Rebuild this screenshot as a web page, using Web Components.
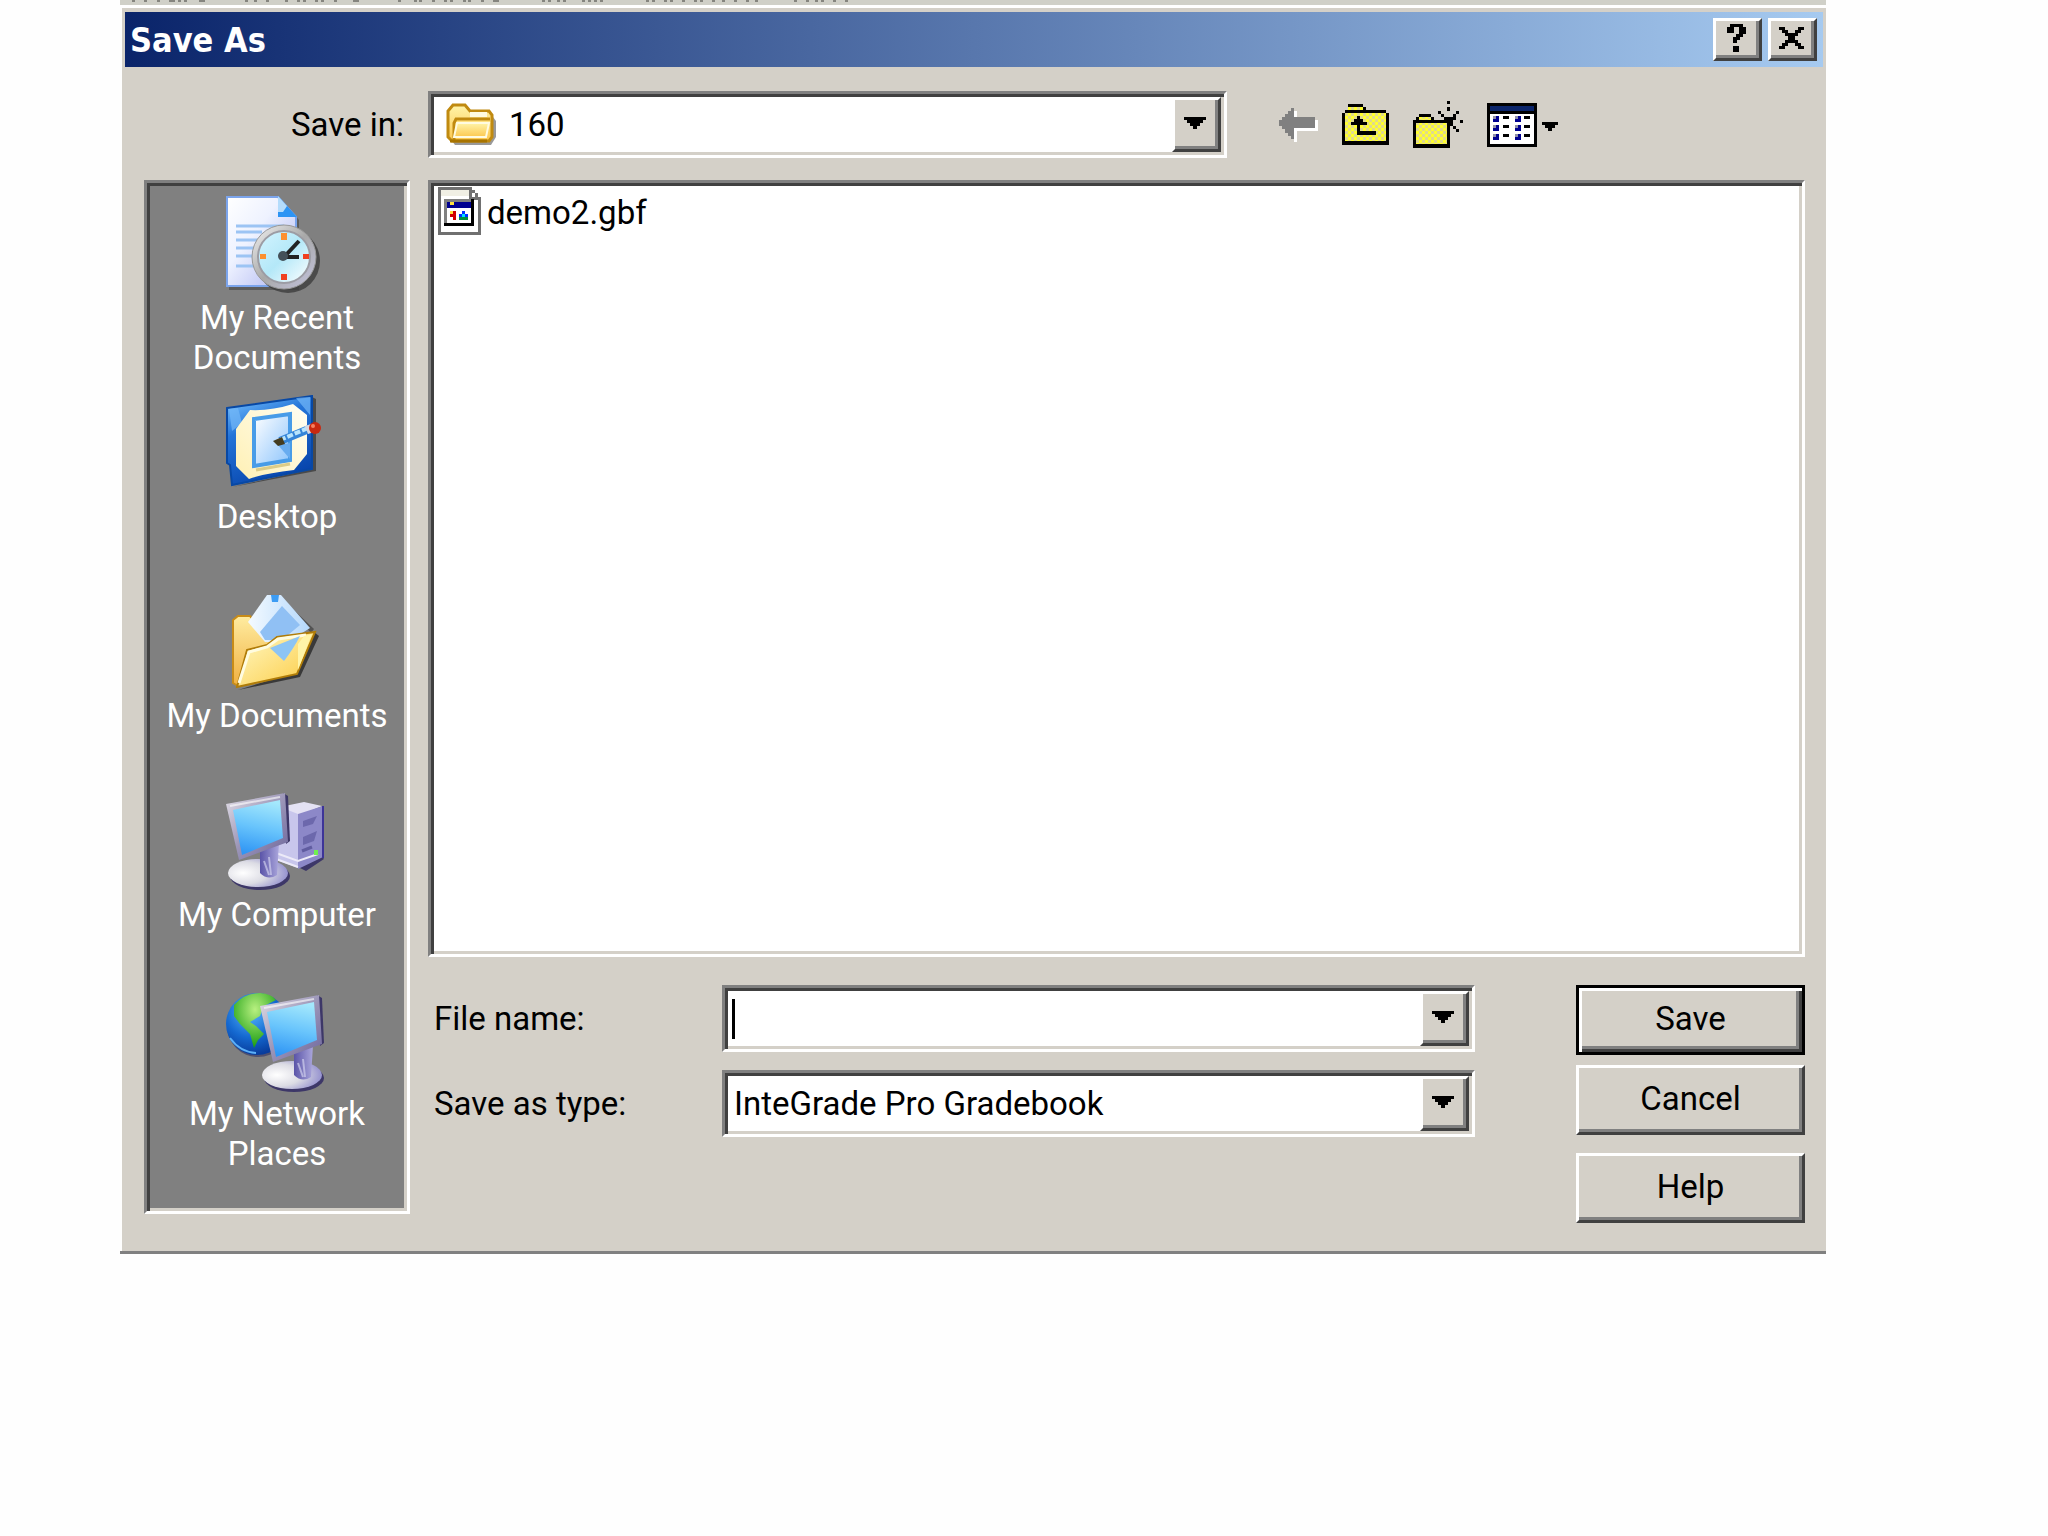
<!DOCTYPE html>
<html lang="en">
<head>
<meta charset="utf-8">
<title>Save As</title>
<style>
  body {
    margin: 0;
    background: #fefefe;
    color: #000;
    font: 33px/40px Roboto, "Liberation Sans", sans-serif;
    --face: #d4d0c8;
    --shadow: #808080;
    --dark: #404040;
  }
  .screen {
    margin: 0 222px 0 120px;
  }
</style>
</head>
<body>
<div class="screen">
  <menu-remnant></menu-remnant>
  <save-dialog heading="Save As">
    <dialog-field slot="location" kind="select" label="Save in:" value="160" icon="folder"></dialog-field>
    <tool-button slot="tools" icon="back" label="Go to last folder visited"></tool-button>
    <tool-button slot="tools" icon="up" label="Up one level"></tool-button>
    <tool-button slot="tools" icon="newFolder" label="Create new folder"></tool-button>
    <tool-button slot="tools" icon="views" label="View menu"></tool-button>

    <place-item slot="places" icon="recent">My Recent Documents</place-item>
    <place-item slot="places" icon="desktop">Desktop</place-item>
    <place-item slot="places" icon="documents">My Documents</place-item>
    <place-item slot="places" icon="computer">My Computer</place-item>
    <place-item slot="places" icon="network">My Network Places</place-item>

    <file-item slot="files">demo2.gbf</file-item>

    <dialog-field slot="fields" kind="text" label="File name:"></dialog-field>
    <dialog-field slot="fields" kind="select" label="Save as type:" value="InteGrade Pro Gradebook"></dialog-field>

    <push-button slot="actions" primary>Save</push-button>
    <push-button slot="actions">Cancel</push-button>
    <push-button slot="actions" class="apart">Help</push-button>
  </save-dialog>
</div>

<script>
const monitor = `
  <ellipse cx="34" cy="83" rx="30" ry="14" fill="#3d3768"/>
  <ellipse cx="32" cy="80" rx="30" ry="14" fill="url(#base)"/>
  <path d="M34 58L53 50L51 82Q42 88 34 80Z" fill="url(#stem)"/>
  <path d="M38 68l5 14M43 64l2 18" stroke="#dcdcf4" stroke-width="2" opacity=".6"/>
  <path d="M57 0L62 3L64 48L60 51Z" fill="#3d3768"/>
  <path d="M0 11L59 0L62 49L13 67Z" fill="url(#bezel)"/>
  <path d="M7 17L54 7L57 45L16 62Z" fill="url(#screen)"/>
  <path d="M4 13L54 4" stroke="#fff" stroke-width="2" opacity=".6"/>`;

const monitorDefs = `
  <defs>
    <radialGradient id="base" cx=".25" cy=".5" r=".8">
      <stop offset="0" stop-color="#fff"/><stop offset=".5" stop-color="#dcdce4"/><stop offset="1" stop-color="#8c88cc"/>
    </radialGradient>
    <linearGradient id="stem"><stop offset="0" stop-color="#5a54a8"/><stop offset="1" stop-color="#aaa6dc"/></linearGradient>
    <linearGradient id="bezel" x2="1" y2="1">
      <stop offset="0" stop-color="#e4e0e8"/><stop offset=".5" stop-color="#9c96b8"/><stop offset="1" stop-color="#6c659c"/>
    </linearGradient>
    <linearGradient id="screen" x1=".6" x2=".4" y2="1">
      <stop offset="0" stop-color="#a4e8fc"/><stop offset=".5" stop-color="#68c4fc"/><stop offset="1" stop-color="#2f95f4"/>
    </linearGradient>
  </defs>`;

const dither = `
  <defs>
    <pattern id="dither" width="6" height="6" patternUnits="userSpaceOnUse">
      <rect width="6" height="6" fill="#ffff30"/>
      <path d="M0 0h3v3H0zM3 3h3v3H3z" fill="#e0da8c"/>
    </pattern>
  </defs>`;

const icons = {
  folder: `<svg width="51" height="44" viewBox="0 0 51 44">
    <defs>
      <linearGradient id="f" x2="0" y2="1"><stop offset="0" stop-color="#fff4a8"/><stop offset="1" stop-color="#fcc850"/></linearGradient>
    </defs>
    <path d="M6 38h38l3-4V14l3 4v16l-5 8H9z" fill="#555" opacity=".6"/>
    <path d="M2 34V8L7 2h12l5 6h19l3 4v22l-3 4H6z" fill="url(#f)" stroke="#c08a10" stroke-width="3"/>
    <path d="M24 9h17v5H24z" fill="#fffbe0"/>
    <path d="M8 37V20l2-4h34" fill="none" stroke="#c08a10" stroke-width="3"/>
    <path d="M11 20h32l-3 14H8z" fill="url(#f)" stroke="#fffbe0" stroke-width="2"/>
    <path d="M4 38h37" stroke="#a87400" stroke-width="3"/>
  </svg>`,

  back: `<svg width="39" height="34" viewBox="0 0 39 34" shape-rendering="crispEdges">
    <path d="M0 12h3V9h3V6h3V3h3V0h3v9h21v11H15v11h-3v-3H9v-3H6v-4H3v-3H0z" fill="#fff" transform="translate(3 3)"/>
    <path d="M0 12h3V9h3V6h3V3h3V0h3v9h21v11H15v11h-3v-3H9v-3H6v-4H3v-3H0z" fill="#808080"/>
  </svg>`,

  up: `<svg width="47" height="41" viewBox="0 0 47 41" shape-rendering="crispEdges">${dither}
    <path d="M3 6h3V0h15v3h3v3h20v3h3v32H0V9h3z" fill="#000"/>
    <path d="M6 3h15v3H6zM3 9h41v28H3z" fill="url(#dither)"/>
    <path d="M15 12h3v3h3v3h4v3h-7v6h16v4H15V21H9v-3h3v-3h3z" fill="#000"/>
  </svg>`,

  newFolder: `<svg width="50" height="47" viewBox="0 0 50 47" shape-rendering="crispEdges">${dither}
    <path d="M0 19h3v-3h3v-3h12v3h3v3h16v28H0z" fill="#000"/>
    <path d="M6 16h12v3H6zM3 22h31v21H3z" fill="url(#dither)"/>
    <path d="M34 0h3v3h-3zM34 6h3v4h-3zM25 10h3v3h-3zM28 13h3v3h-3zM31 16h3v3h-3zM43 10h3v3h-3zM43 13h-3v3h3zM40 16h-3v3h3zM34 16h3v3h-3zM37 19h3v3h-3zM40 22h-3v3h3zM40 19h3v-3h-3zM47 19h3v3h-3zM40 25h3v3h-3zM43 28h3v3h-3zM28 19h3v3h-3zM34 25h3v3h-3z" fill="#000"/>
  </svg>`,

  views: `<svg width="71" height="44" viewBox="0 0 71 44" shape-rendering="crispEdges">
    <path d="M0 0h50v44H0z"/>
    <path d="M3 3h44v5H3z" fill="#0a246a"/>
    <path d="M3 11h44v30H3z" fill="#fff"/>
    <path d="M6 13h6v6H6zM6 22h6v6H6zM6 31h6v6H6zM28 13h6v6h-6zM28 22h6v6h-6zM28 31h6v6h-6z" fill="#000090"/>
    <path d="M6 13h3v3H6zM6 22h3v3H6zM6 31h3v3H6zM28 13h3v3h-3zM28 22h3v3h-3zM28 31h3v3h-3z" fill="#9090a8"/>
    <path d="M16 13h6v3h-6zM16 22h6v3h-6zM16 31h6v3h-6zM37 13h6v3h-6zM37 22h6v3h-6zM37 31h6v3h-6z"/>
    <path d="M55 19h16v3h-3v3h-3v3h-4v-3h-3v-3h-3z"/>
  </svg>`,

  help: `<svg width="19" height="28" viewBox="0 0 19 28" shape-rendering="crispEdges">
    <path d="M3 0h13v3h3v7h-3v3h-3v3h-3v3H6v-6h3v-3h3V3H7v6H0V3h3zM6 22h6v6H6z"/>
  </svg>`,

  close: `<svg width="25" height="22" viewBox="0 0 25 22" shape-rendering="crispEdges">
    <path d="M0 0h6v3h3v3h7V3h3V0h6v3h-3v3h-3v3h-3v4h3v3h3v3h3v3h-6v-3h-3v-3H9v3H6v3H0v-3h3v-3h3v-3h3V9H6V6H3V3H0z"/>
  </svg>`,

  arrow: `<svg width="22" height="12" viewBox="0 0 22 12" shape-rendering="crispEdges">
    <path d="M0 0h22v3h-3v3h-3v3h-3v3H9V9H6V6H3V3H0z"/>
  </svg>`,

  file: `<svg width="43" height="48" viewBox="0 0 43 48" shape-rendering="crispEdges">
    <path d="M0 0h34v3h3v3h3v4h3v38H0z" fill="#707070"/>
    <path d="M3 3h28v10h9v32H3z" fill="#fff"/>
    <path d="M3 3h28v6H3z" fill="#f0efe4"/>
    <path d="M34 6h3v4h-3z" fill="#fff"/>
    <path d="M6 12h30v27H6z" fill="#000"/>
    <path d="M6 12h27v24H6z" fill="#808080"/>
    <path d="M9 15h24v6H9z" fill="#000090"/>
    <path d="M9 21h24v15H9z" fill="#fff"/>
    <path d="M12 15h4v3h-4z" fill="#ffe040"/>
    <path d="M12 27h3v-3h3v9h-3v-3h-3z" fill="#d00000"/>
    <path d="M12 24h3v3h-3z" fill="#ffe040"/>
    <path d="M21 27h9v6h-9z" fill="#009040"/>
    <path d="M24 24h3v3h-3zM21 27h3v3h-3zM27 27h3v3h-3z" fill="#0030ff"/>
    <path d="M24 27h3v3h-3z" fill="#00e0ff"/>
  </svg>`,

  recent: `<svg width="102" height="102" viewBox="0 0 102 102">
    <defs>
      <linearGradient id="p" x2="1" y2="1"><stop offset="0" stop-color="#fff"/><stop offset=".4" stop-color="#eef2ff"/><stop offset="1" stop-color="#a8b0f0"/></linearGradient>
      <linearGradient id="r" x2="1" y2="1"><stop offset="0" stop-color="#f4f4f4"/><stop offset=".5" stop-color="#a8a8a8"/><stop offset="1" stop-color="#c4c4e0"/></linearGradient>
      <linearGradient id="d" x2="1" y2="1"><stop offset="0" stop-color="#d4f4ff"/><stop offset=".5" stop-color="#b4e8f8"/><stop offset="1" stop-color="#fff"/></linearGradient>
    </defs>
    <path d="M3 91h67V20l3 4v70H3z" fill="#444" opacity=".6"/>
    <path d="M1 1h51l18 20v69H1z" fill="url(#p)" stroke="#7ba4ec" stroke-width="2"/>
    <path d="M52 0l19 21H52z" fill="#2c94f4"/>
    <path d="M52 0l9 10-4 6h-5z" fill="#b4dcfc"/>
    <path d="M10 30h48M10 36h26M10 44h22M10 52h18M10 60h18M10 70h18" stroke="#9cc4f4" stroke-width="3"/>
    <circle cx="62" cy="65" r="32" fill="#3c3c3c" opacity=".8"/>
    <circle cx="58" cy="61" r="32" fill="url(#r)" stroke="#999" stroke-width="1"/>
    <circle cx="58" cy="61" r="26" fill="url(#d)" stroke="#9c9ca4" stroke-width="2"/>
    <path d="M55 37h6v7h-6zM34 58h6v5h-6z" fill="#fc9030"/>
    <path d="M55 78h6v6h-6zM77 58h6v5h-6z" fill="#f04020"/>
    <path d="M58 61L73 45" stroke="#222" stroke-width="4"/>
    <path d="M57 61H73" stroke="#222" stroke-width="4"/>
    <circle cx="57" cy="60" r="5" fill="#445058"/>
  </svg>`,

  desktop: `<svg width="102" height="102" viewBox="0 0 102 102">
    <defs>
      <linearGradient id="b" x1=".3" x2=".7" y2="1"><stop offset="0" stop-color="#68b4f8"/><stop offset=".3" stop-color="#2474d8"/><stop offset="1" stop-color="#0440a8"/></linearGradient>
      <linearGradient id="c" x1="1" x2="0" y2="1"><stop offset="0" stop-color="#fffef4"/><stop offset="1" stop-color="#fff0b4"/></linearGradient>
      <linearGradient id="g" x2="1" y2="1"><stop offset="0" stop-color="#fff"/><stop offset="1" stop-color="#8cc4fc"/></linearGradient>
    </defs>
    <path d="M6 92L90 76V4l-4-2v72z" fill="#333" opacity=".7"/>
    <path d="M1 13L86 1V74L6 90L4 70L1 68z" fill="url(#b)" stroke="#0848a4" stroke-width="2"/>
    <path d="M3 14L12 13L16 28L6 36zM70 3l14-1v18z" fill="#74b8f8" opacity=".7"/>
    <path d="M24 15Q45 16 67 9L81 20V59L68 75Q40 78 23 84L10 71V34z" fill="url(#c)"/>
    <path d="M28 24L64 19V65L28 71z" fill="url(#g)" stroke="#489ce8" stroke-width="4"/>
    <path d="M30 75l34-6" stroke="#dccc88" stroke-width="3"/>
    <path d="M52 50l12 14V48z" fill="#68acf0"/>
    <path d="M54 46L83 34" stroke="#3484d8" stroke-width="8"/>
    <path d="M54 45L82 33" stroke="#b8e4fc" stroke-width="4" stroke-dasharray="6 2"/>
    <path d="M47 46l9-4 3 7-7 2z" fill="#443c20"/>
    <path d="M79 31l6-2 3 8-6 2z" fill="#d8d8e0"/>
    <circle cx="89" cy="33" r="6" fill="#c82810"/>
    <circle cx="87" cy="31" r="2" fill="#f88060"/>
  </svg>`,

  documents: `<svg width="102" height="102" viewBox="0 0 102 102">
    <defs>
      <linearGradient id="k" x2="0" y2="1"><stop offset="0" stop-color="#ffeca0"/><stop offset="1" stop-color="#f0b040"/></linearGradient>
      <linearGradient id="w" x2="1" y2="1"><stop offset="0" stop-color="#fffac8"/><stop offset="1" stop-color="#fcca40"/></linearGradient>
      <linearGradient id="n" x2="1"><stop offset="0" stop-color="#f4faff"/><stop offset="1" stop-color="#b4d8fc"/></linearGradient>
    </defs>
    <path d="M12 96L74 83L93 42l-5-4L70 78z" fill="#222" opacity=".75"/>
    <path d="M52 1L88 35l-3 4z" fill="#333" opacity=".6"/>
    <path d="M7 26l5-4h12l22 26L12 92l-5-3z" fill="url(#k)" stroke="#c88c18" stroke-width="2"/>
    <path d="M41 1h14L84 34L62 48H39L22 28z" fill="url(#n)"/>
    <path d="M56 12L74 31L56 46H39L34 38z" fill="#90c0f4"/>
    <path d="M45 1h8l-1 7h-6z" fill="#3c9cf4"/>
    <path d="M21 56L41 51L51 43L89 38L71 80L11 93z" fill="url(#w)" stroke="#b07c08" stroke-width="2"/>
    <path d="M13 89L23 58L41 53L52 45L80 41" fill="none" stroke="#fffce0" stroke-width="3"/>
    <path d="M78 42l8-2L72 76V50z" fill="#fff4a8"/>
    <path d="M44 54L74 42Q68 54 58 67z" fill="#8cc4f4"/>
  </svg>`,

  computer: `<svg width="102" height="102" viewBox="0 0 102 102">${monitorDefs}
    <path d="M72 74l8 4L98 66l-3-4z" fill="#3d3768"/>
    <path d="M54 14L78 9L96 13L72 23z" fill="#e4e2f4"/>
    <path d="M54 14L72 21V75L48 66z" fill="#c8c6ec"/>
    <path d="M72 21L97 13V64L72 76z" fill="#8c88c8"/>
    <path d="M96 13h2v52h-2z" fill="#3d3498"/>
    <path d="M77 28l14-5-4 8-10 3zM77 44l14-6-3 10-11 4z" fill="#6c68ac"/>
    <path d="M76 58l10-4" stroke="#605ca0" stroke-width="3"/>
    <path d="M50 60l22 8 20-7M50 66l22 8" fill="none" stroke="#eceaf8" stroke-width="2"/>
    <path d="M88 57h4v5h-4z" fill="#70f050"/>
    ${monitor}
  </svg>`,

  network: `<svg width="102" height="102" viewBox="0 0 102 102">${monitorDefs}
    <defs>
      <radialGradient id="o" cx=".4" cy=".3" r=".7"><stop offset="0" stop-color="#58b8fc"/><stop offset=".6" stop-color="#1468d0"/><stop offset="1" stop-color="#083c9c"/></radialGradient>
      <radialGradient id="l" cx=".5" cy=".3" r=".7"><stop offset="0" stop-color="#b8f080"/><stop offset="1" stop-color="#189c10"/></radialGradient>
    </defs>
    <circle cx="32" cy="34" r="31" fill="#303060" opacity=".6"/>
    <circle cx="31" cy="32" r="31" fill="url(#o)"/>
    <path d="M8 13Q18 1 34 1Q46 2 50 8L38 14L34 24L24 30L30 34L38 42L32 48L28 56L24 42L14 32L8 24z" fill="url(#l)"/>
    <path d="M4 46Q14 60 30 61" fill="none" stroke="#5cb0f8" stroke-width="2"/>
    <g transform="translate(34 3)">${monitor}</g>
  </svg>`
};

const raised = `
  background: var(--face);
  border: 3px solid;
  border-color: #fff var(--dark) var(--dark) #fff;
  box-shadow: inset -3px -3px var(--shadow);`;

const sunken = `
  border: 3px solid;
  border-color: var(--shadow) #fff #fff var(--shadow);
  box-shadow: inset 3px 3px var(--dark), inset -3px -3px var(--face);`;

// Lower edge of the menu bar of the window behind the dialog
class MenuRemnant extends HTMLElement {
  constructor() {
    super();
    const ticks = [132, 144, 157, 169, 172, 178, 184, 199, 202, 245, 254, 266, 285, 297, 303, 315, 321, 334,
      353, 356, 398, 414, 419, 432, 444, 450, 463, 468, 481, 493, 496, 542, 548, 557, 563, 582, 588, 594, 600,
      646, 652, 664, 670, 682, 694, 700, 712, 722, 734, 746, 755, 794, 806, 815, 821, 833, 845];
    this.attachShadow({mode: 'open'}).innerHTML = `
      <style>
        :host { display: block; background: #d0d0c8; border-bottom: 3px solid #fff; }
        svg { display: block; }
      </style>
      <svg width="760" height="5" aria-hidden="true" shape-rendering="crispEdges">
        <path d="${ticks.map(x => `M${x - 120} 0h3v2h-3z`).join('')}" fill="#85857f"/>
      </svg>`;
  }
}

class SaveDialog extends HTMLElement {
  constructor() {
    super();
    this.attachShadow({mode: 'open'}).innerHTML = `
      <style>
        :host { display: block; border-bottom: 3px solid var(--shadow); }
        .window { margin-left: 2px; padding: 4px 3px 0; background: var(--face); }
        header {
          display: flex; align-items: center; gap: 6px; height: 55px; padding: 0 6px 0 5px;
          background: linear-gradient(90deg, #0a246a, #a6caf0);
        }
        h1 { flex: 1; margin: 0; color: #fff; font: bold 34px/40px "DejaVu Sans Condensed", "DejaVu Sans", sans-serif; }
        header button {
          display: flex; justify-content: center; align-items: center;
          width: 49px; height: 43px; padding: 0 3px 3px 0; ${raised}
        }
        .content { padding: 24px 18px 28px 19px; }
        .top { display: flex; align-items: center; margin-bottom: 22px; }
        .top slot[name=location]::slotted(*) { flex: 1; --label-width: 284px; --label-pad: 24px; --label-align: right; }
        .tools { display: flex; align-items: center; gap: 24px; margin: 0 247px 0 52px; }
        .main { display: flex; align-items: flex-start; gap: 18px; }
        nav {
          flex: none; box-sizing: border-box; width: 266px; padding: 13px 6px 20px;
          background: #808080; ${sunken}
        }
        .right { flex: 1; display: flex; flex-direction: column; gap: 28px; }
        .files { box-sizing: border-box; min-height: 777px; padding: 4px 7px; background: #fff; ${sunken} }
        .form { display: flex; gap: 101px; }
        .fields { flex: 1; display: flex; flex-direction: column; gap: 18px; }
        .actions { flex: none; width: 229px; display: flex; flex-direction: column; gap: 10px; }
        .actions slot::slotted(.apart) { margin-top: 8px; }
      </style>
      <div class="window" role="dialog" aria-labelledby="heading">
        <header>
          <h1 id="heading"></h1>
          <button type="button" aria-label="Help">${icons.help}</button>
          <button type="button" aria-label="Close">${icons.close}</button>
        </header>
        <div class="content">
          <div class="top">
            <slot name="location"></slot>
            <div class="tools"><slot name="tools"></slot></div>
          </div>
          <div class="main">
            <nav aria-label="Places"><slot name="places"></slot></nav>
            <div class="right">
              <div class="files"><slot name="files"></slot></div>
              <div class="form">
                <div class="fields"><slot name="fields"></slot></div>
                <div class="actions"><slot name="actions"></slot></div>
              </div>
            </div>
          </div>
        </div>
      </div>`;
    this.shadowRoot.getElementById('heading').textContent = this.getAttribute('heading');
  }
}

// A label with its combo box; kind is "select" or "text"
class DialogField extends HTMLElement {
  constructor() {
    super();
    const icon = icons[this.getAttribute('icon')] || '';
    const control = this.getAttribute('kind') === 'select'
      ? '<select id="control"><option></option></select>'
      : '<input id="control" type="text">';
    this.attachShadow({mode: 'open'}).innerHTML = `
      <style>
        :host { display: flex; align-items: center; }
        label {
          flex: none; box-sizing: border-box; width: var(--label-width, 294px);
          padding: 0 var(--label-pad, 0) 0 6px; text-align: var(--label-align, left);
        }
        .combo {
          flex: 1; display: flex; align-items: center; box-sizing: border-box; height: 67px;
          padding: 3px; background: #fff; ${sunken}
        }
        .combo > svg { flex: none; margin: 0 6px 0 12px; }
        select, input {
          flex: 1; min-width: 0; height: 100%; padding: 0 6px; border: 0; outline: 0;
          appearance: none; background: none; color: inherit; font: inherit;
        }
        input { background: linear-gradient(#000, #000) 4px 50% / 3px 40px no-repeat; }
        .drop {
          flex: none; display: flex; align-items: center; justify-content: center;
          box-sizing: border-box; width: 49px; height: 100%; padding: 0 3px 3px 0; ${raised}
        }
      </style>
      <label for="control"></label>
      <div class="combo">${icon}${control}<span class="drop" aria-hidden="true">${icons.arrow}</span></div>`;
    this.shadowRoot.querySelector('label').textContent = this.getAttribute('label');
    const option = this.shadowRoot.querySelector('option');
    if (option) {
      option.textContent = this.getAttribute('value');
    }
  }
}

class ToolButton extends HTMLElement {
  constructor() {
    super();
    this.attachShadow({mode: 'open'}).innerHTML = `
      <style>
        :host { display: block; }
        button { display: block; padding: 0; border: 0; background: none; }
        svg { display: block; }
      </style>
      <button type="button">${icons[this.getAttribute('icon')]}</button>`;
    this.shadowRoot.querySelector('button').setAttribute('aria-label', this.getAttribute('label'));
  }
}

class PlaceItem extends HTMLElement {
  constructor() {
    super();
    this.attachShadow({mode: 'open'}).innerHTML = `
      <style>
        :host { display: block; min-height: 199px; }
        button {
          display: flex; flex-direction: column; align-items: center; width: 100%;
          padding: 0; border: 0; background: none; color: #fff; font: inherit;
        }
        span { max-width: 232px; }
        svg { display: block; }
      </style>
      <button type="button">${icons[this.getAttribute('icon')]}<span><slot></slot></span></button>`;
  }
}

class FileItem extends HTMLElement {
  constructor() {
    super();
    this.attachShadow({mode: 'open'}).innerHTML = `
      <style>
        :host { display: block; }
        button {
          display: flex; align-items: center; gap: 6px;
          padding: 0; border: 0; background: none; color: inherit; font: inherit;
        }
        span { padding-top: 4px; }
      </style>
      <button type="button">${icons.file}<span><slot></slot></span></button>`;
  }
}

class PushButton extends HTMLElement {
  constructor() {
    super();
    this.attachShadow({mode: 'open'}).innerHTML = `
      <style>
        :host { display: block; }
        button {
          display: block; box-sizing: border-box; width: 100%; height: 70px; padding: 0 0 3px;
          color: inherit; font: inherit; ${raised}
        }
        :host([primary]) button {
          border-color: #000;
          box-shadow: inset 3px 3px #fff, inset -3px -3px var(--dark), inset -6px -6px var(--shadow);
        }
      </style>
      <button type="button"><slot></slot></button>`;
  }
}

customElements.define('menu-remnant', MenuRemnant);
customElements.define('save-dialog', SaveDialog);
customElements.define('dialog-field', DialogField);
customElements.define('tool-button', ToolButton);
customElements.define('place-item', PlaceItem);
customElements.define('file-item', FileItem);
customElements.define('push-button', PushButton);
</script>
</body>
</html>
